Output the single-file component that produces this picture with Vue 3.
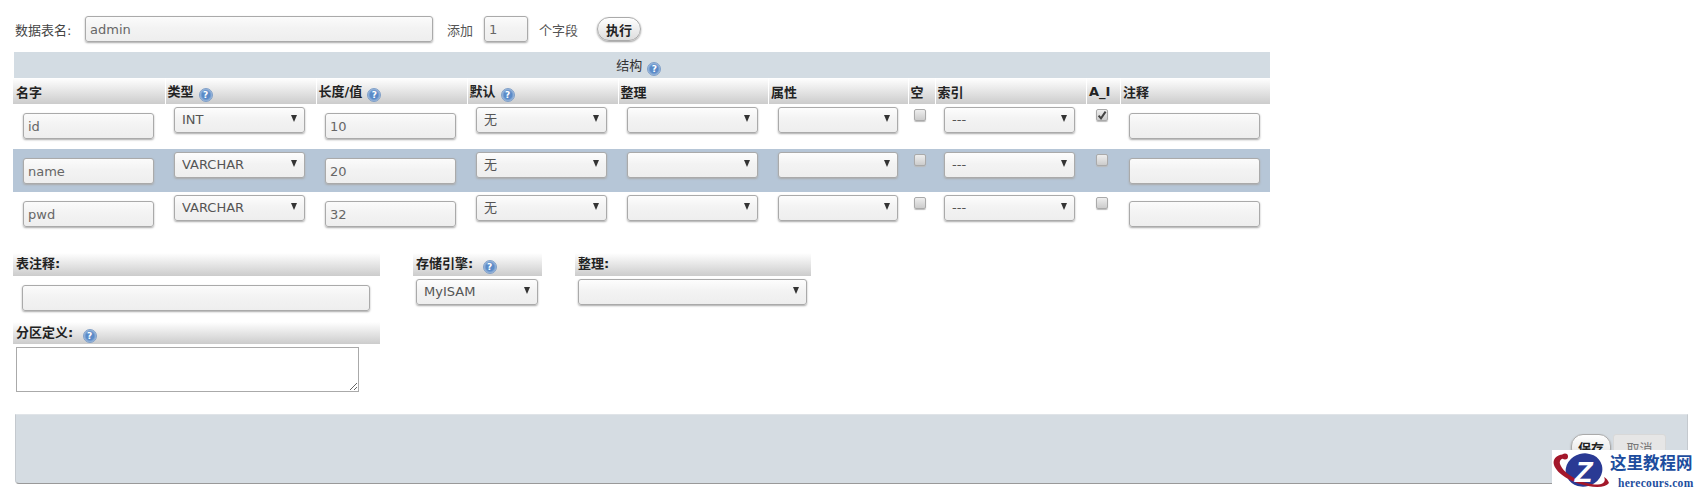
<script setup>
const columns = [
  { label: '名字' },
  { label: '类型', help: true },
  { label: '长度/值', help: true },
  { label: '默认', help: true },
  { label: '整理' },
  { label: '属性' },
  { label: '空' },
  { label: '索引' },
  { label: 'A_I' },
  { label: '注释' }
]
const rows = [
  { name: 'id', type: 'INT', len: '10', ai: true },
  { name: 'name', type: 'VARCHAR', len: '20', ai: false },
  { name: 'pwd', type: 'VARCHAR', len: '32', ai: false }
]
</script>

<template>
  <div class="page">
    <div class="top">
      <label class="top-label">数据表名:</label>
      <input class="field name-field" value="admin" />
      <span class="add">添加</span>
      <input class="field num-field" value="1" />
      <span class="unit">个字段</span>
      <button class="btn run">执行</button>
    </div>

    <table class="struct">
      <colgroup>
        <col class="c1" /><col class="c2" /><col class="c2" /><col class="c2" /><col class="c5" />
        <col class="c6" /><col class="c7" /><col class="c8" /><col class="c9" /><col class="c10" />
      </colgroup>
      <thead>
        <tr>
          <th colspan="10" class="caption">结构<span class="help">?</span></th>
        </tr>
        <tr>
          <th v-for="c in columns" :key="c.label" class="head">
            {{ c.label }}<span v-if="c.help" class="help">?</span>
          </th>
        </tr>
      </thead>
      <tbody>
        <tr v-for="r in rows" :key="r.name">
          <td><input class="field cell-field" :value="r.name" /></td>
          <td>
            <span class="sel"><select><option>{{ r.type }}</option></select></span>
          </td>
          <td><input class="field cell-field" :value="r.len" /></td>
          <td>
            <span class="sel"><select><option>无</option></select></span>
          </td>
          <td>
            <span class="sel"><select><option></option></select></span>
          </td>
          <td>
            <span class="sel sel-attr"><select><option></option></select></span>
          </td>
          <td class="chk"><span class="box"></span></td>
          <td>
            <span class="sel"><select><option>---</option></select></span>
          </td>
          <td class="chk chk-ai">
            <span class="box">
              <svg v-if="r.ai" viewBox="0 0 12 12" width="12" height="12">
                <path d="M2.6 6.6 L5 9.4 L9.6 2.6" fill="none" stroke="#444" stroke-width="2" />
              </svg>
            </span>
          </td>
          <td class="last"><input class="field cell-field" /></td>
        </tr>
      </tbody>
    </table>

    <div class="lower">
      <div class="col-comment">
        <div class="subhead">表注释:</div>
        <input class="field comment-field" />
        <div class="subhead part-head">分区定义: <span class="help">?</span></div>
        <textarea class="area"></textarea>
      </div>
      <div class="col-engine">
        <div class="subhead">存储引擎: <span class="help">?</span></div>
        <span class="sel sel-engine"><select><option>MyISAM</option></select></span>
      </div>
      <div class="col-coll">
        <div class="subhead">整理:</div>
        <span class="sel sel-coll"><select><option></option></select></span>
      </div>
    </div>

    <div class="bar">
      <button class="btn save">保存</button>
      <button class="cancel">取消</button>
    </div>

    <div class="mark">
      <svg class="mark-logo" viewBox="0 0 60 43" width="60" height="43">
        <ellipse cx="32" cy="20" rx="18.5" ry="16.5" transform="rotate(-15 32 20)" fill="#2a3a94" />
        <path d="M14 5 C6 3 0 9 2 15 C5 24 20 33 36 36 C46 38 54 37 57 33 C56 30 54 28 52 27 C54 31 52 34 46 34.5 C32 35 12 25 8 14 C7 10 10 8 14 8 Z" fill="#a3172a" />
        <circle cx="13" cy="6.5" r="3" fill="#a3172a" />
        <text x="31.5" y="32" text-anchor="middle" class="mark-z">Z</text>
      </svg>
      <div class="mark-text">
        <div class="mark-cn">这里教程网</div>
        <div class="mark-en">herecours.com</div>
      </div>
    </div>
  </div>
</template>

<style scoped>
.page {
  position: relative;
  width: 1699px;
  height: 493px;
  overflow: hidden;
  background: #fff;
  font-family: "DejaVu Sans", "Noto Sans CJK SC", sans-serif;
  font-size: 13px;
  color: #444;
}

.top {
  display: flex;
  align-items: center;
  height: 26px;
  padding: 16px 0 10px 15px;
}
.top-label { width: 70px; color: #444; }
.add { margin-left: 14px; width: 37px; color: #555; }
.unit { margin-left: 11px; width: 58px; color: #555; }

.field {
  box-sizing: border-box;
  height: 26px;
  padding: 0 4px;
  border: 1px solid #aaa;
  border-radius: 3px;
  background: linear-gradient(#fbfbfb, #f3f3f3 45%, #eee);
  box-shadow: 0 1px 2px #aaa;
  font: 13px "DejaVu Sans", "Noto Sans CJK SC", sans-serif;
  color: #666;
  outline: none;
}
.name-field { width: 348px; }
.num-field { width: 44px; }

.btn {
  box-sizing: border-box;
  padding: 0;
  border: 1px solid #aaa;
  border-radius: 13px;
  background: linear-gradient(#fff, #ddd);
  box-shadow: 0 1px 2px #999;
  font: bold 13px "DejaVu Sans", "Noto Sans CJK SC", sans-serif;
  color: #222;
}
.run { width: 44px; height: 24px; }

.struct {
  width: 1256px;
  margin-left: 13px;
  border-collapse: separate;
  border-spacing: 0;
  table-layout: fixed;
}
.c1 { width: 151.5px; }
.c2 { width: 151px; }
.c5 { width: 150.5px; }
.c6 { width: 139.5px; }
.c7 { width: 27px; }
.c8 { width: 151.5px; }
.c9 { width: 34px; }
.c10 { width: 149.5px; }

.struct th { padding: 0; font-weight: bold; color: #222; text-align: left; }
.struct .caption {
  height: 26px;
  padding-right: 6px;
  border-left: 1px solid #fff;
  background: #d3dce3;
  text-align: center;
  font-weight: normal;
  color: #333;
}
.struct .head {
  height: 26px;
  padding-left: 2px;
  border-left: 1px solid #fff;
  background: linear-gradient(#fff, #ccc);
  white-space: nowrap;
}
.struct .head:first-child { border-left: 0; padding-left: 3px; }

.struct td {
  height: 44px;
  padding: 3px 0 0 9.5px;
  box-sizing: border-box;
  vertical-align: top;
}
.struct tbody tr:nth-child(1) td { height: 45px; }
.struct tbody tr:nth-child(2) td { height: 43px; background: #b6c6d7; }
.struct td:first-child { padding-left: 10px; }
.struct td.last { padding-left: 8.5px; }

.cell-field { display: block; width: 131px; margin-top: 6px; }

.sel {
  position: relative;
  display: block;
  width: 131px;
  height: 26px;
}
.sel::after {
  content: "";
  position: absolute;
  top: 8px;
  right: 8px;
  border-style: solid;
  border-width: 7px 3px 0;
  border-color: #333 transparent transparent;
  pointer-events: none;
}
.sel select {
  display: block;
  box-sizing: border-box;
  width: 100%;
  height: 100%;
  padding: 0 0 1px 7px;
  border: 1px solid #aaa;
  border-radius: 3px;
  appearance: none;
  background: linear-gradient(#fdfdfd, #f3f3f3 45%, #eee);
  box-shadow: 0 1px 2px #aaa;
  font: 13px "DejaVu Sans", "Noto Sans CJK SC", sans-serif;
  color: #555;
  outline: none;
}
.sel-attr { width: 120px; }
.sel-engine { width: 122px; margin: 3px 0 0 3px; }
.sel-coll { width: 229px; margin: 3px 0 0 3px; }

.struct td.chk { padding: 5px 0 0 6px; }
.struct td.chk-ai { padding-left: 10px; }
.box {
  display: block;
  box-sizing: border-box;
  width: 12px;
  height: 12px;
  border: 1px solid #aaa;
  border-radius: 2px;
  background: linear-gradient(#eee, #ccc);
  box-shadow: 0 1px 1px #bbb;
}
.box svg { display: block; margin: -1px; }

.help {
  display: inline-block;
  box-sizing: border-box;
  width: 14px;
  height: 14px;
  margin-left: 5px;
  border: 1px solid #7f9fc8;
  border-radius: 50%;
  background: radial-gradient(circle at 50% 50%, #5b8bc8 0 45%, #c2d4ea 85%);
  font: bold 9px/12px "DejaVu Sans", sans-serif;
  color: #fff;
  text-align: center;
  vertical-align: -2px;
}

.lower {
  display: flex;
  margin: 17px 0 0 13px;
  height: 139px;
}
.col-comment { width: 367px; margin-right: 33px; }
.col-engine { width: 129px; margin-right: 33px; }
.col-coll { width: 236px; }
.subhead {
  box-sizing: border-box;
  height: 23px;
  padding: 0 0 0 3px;
  background: linear-gradient(#fff, #ccc);
  font-weight: bold;
  color: #222;
  line-height: 22px;
  white-space: nowrap;
}
.comment-field { display: block; width: 348px; margin: 9px 0 11px 8.5px; }
.part-head { height: 22px; }
.area {
  display: block;
  box-sizing: border-box;
  width: 343px;
  height: 45px;
  margin: 3px 0 0 3px;
  border: 1px solid #aaa;
  background: #fff;
  outline: none;
}

.bar {
  box-sizing: border-box;
  display: flex;
  align-items: flex-start;
  justify-content: flex-end;
  gap: 2px;
  width: 1673px;
  height: 70px;
  margin: 22px 0 0 15px;
  padding: 19px 21px 0 0;
  border: 1px solid #c4c9ce;
  border-top-color: #e0e4e8;
  border-bottom-color: #999;
  border-radius: 0 0 4px 4px;
  background: #d5dce2;
}
.save { width: 40px; height: 27px; border-radius: 12px; }
.cancel {
  box-sizing: border-box;
  width: 53px;
  height: 27px;
  padding: 0;
  border: 1px solid #d8d8d8;
  border-radius: 3px;
  background: #e6e6e6;
  font: 13px "DejaVu Sans", "Noto Sans CJK SC", sans-serif;
  color: #777;
}

.mark {
  position: absolute;
  left: 1552px;
  top: 450px;
  display: flex;
  width: 147px;
  height: 43px;
  background: #fff;
}
.mark-logo { flex: none; display: block; }
.mark-z {
  font: italic bold 29px "Liberation Sans", sans-serif;
  fill: #fff;
}
.mark-text { width: 87px; margin-left: -2px; }
.mark-cn {
  margin-top: 3px;
  font: 700 16.5px/18px "Noto Sans CJK SC", sans-serif;
  color: #1d4d9e;
  white-space: nowrap;
}
.mark-en {
  margin: 5px 0 0 8px;
  font: bold 11.5px/14px "Liberation Serif", serif;
  letter-spacing: 0.3px;
  color: #1d4d9e;
  white-space: nowrap;
}
</style>

<style>
body { margin: 0; }
</style>
